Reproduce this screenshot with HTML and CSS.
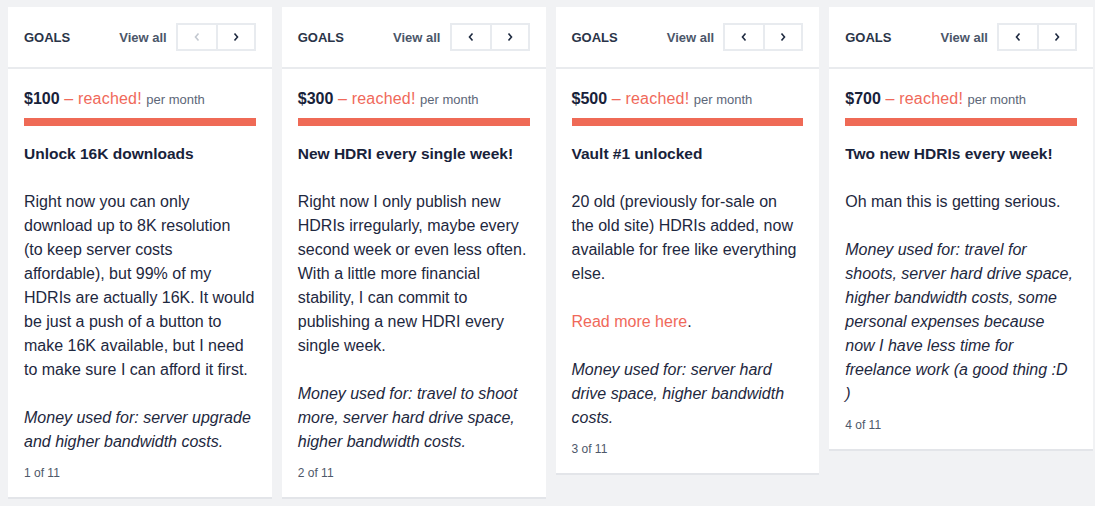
FILE: index.html
```html
<!DOCTYPE html>
<html lang="en">
<head>
<meta charset="utf-8">
<title>Goals</title>
<link rel="stylesheet" href="styles.css">
</head>
<body>
<div class="goals">
  <section class="card">
    <header class="card-head">
      <h2 class="card-title">GOALS</h2>
      <a class="view-all" href="#">View all</a>
      <div class="pager">
        <button class="pager-btn is-disabled" aria-label="Previous"><svg viewBox="0 0 8 12" class="chev"><polyline points="5.5,2.5 2.5,6 5.5,9.5"/></svg></button>
        <button class="pager-btn" aria-label="Next"><svg viewBox="0 0 8 12" class="chev"><polyline points="2.5,2.5 5.5,6 2.5,9.5"/></svg></button>
      </div>
    </header>
    <div class="card-body">
      <div class="price"><strong>$100</strong><span class="reached"> – reached!</span> <span class="per">per month</span></div>
      <div class="bar"></div>
      <h3 class="goal-title">Unlock 16K downloads</h3>
      <p class="text">Right now you can only<br>download up to 8K resolution<br>(to keep server costs<br>affordable), but 99% of my<br>HDRIs are actually 16K. It would<br>be just a push of a button to<br>make 16K available, but I need<br>to make sure I can afford it first.</p>
      <p class="text used">Money used for: server upgrade<br>and higher bandwidth costs.</p>
      <div class="count">1 of 11</div>
    </div>
  </section>

  <section class="card">
    <header class="card-head">
      <h2 class="card-title">GOALS</h2>
      <a class="view-all" href="#">View all</a>
      <div class="pager">
        <button class="pager-btn" aria-label="Previous"><svg viewBox="0 0 8 12" class="chev"><polyline points="5.5,2.5 2.5,6 5.5,9.5"/></svg></button>
        <button class="pager-btn" aria-label="Next"><svg viewBox="0 0 8 12" class="chev"><polyline points="2.5,2.5 5.5,6 2.5,9.5"/></svg></button>
      </div>
    </header>
    <div class="card-body">
      <div class="price"><strong>$300</strong><span class="reached"> – reached!</span> <span class="per">per month</span></div>
      <div class="bar"></div>
      <h3 class="goal-title">New HDRI every single week!</h3>
      <p class="text">Right now I only publish new<br>HDRIs irregularly, maybe every<br>second week or even less often.<br>With a little more financial<br>stability, I can commit to<br>publishing a new HDRI every<br>single week.</p>
      <p class="text used">Money used for: travel to shoot<br>more, server hard drive space,<br>higher bandwidth costs.</p>
      <div class="count">2 of 11</div>
    </div>
  </section>

  <section class="card">
    <header class="card-head">
      <h2 class="card-title">GOALS</h2>
      <a class="view-all" href="#">View all</a>
      <div class="pager">
        <button class="pager-btn" aria-label="Previous"><svg viewBox="0 0 8 12" class="chev"><polyline points="5.5,2.5 2.5,6 5.5,9.5"/></svg></button>
        <button class="pager-btn" aria-label="Next"><svg viewBox="0 0 8 12" class="chev"><polyline points="2.5,2.5 5.5,6 2.5,9.5"/></svg></button>
      </div>
    </header>
    <div class="card-body">
      <div class="price"><strong>$500</strong><span class="reached"> – reached!</span> <span class="per">per month</span></div>
      <div class="bar"></div>
      <h3 class="goal-title">Vault #1 unlocked</h3>
      <p class="text">20 old (previously for-sale on<br>the old site) HDRIs added, now<br>available for free like everything<br>else.</p>
      <p class="text"><a class="link" href="#">Read more here</a>.</p>
      <p class="text used">Money used for: server hard<br>drive space, higher bandwidth<br>costs.</p>
      <div class="count">3 of 11</div>
    </div>
  </section>

  <section class="card">
    <header class="card-head">
      <h2 class="card-title">GOALS</h2>
      <a class="view-all" href="#">View all</a>
      <div class="pager">
        <button class="pager-btn" aria-label="Previous"><svg viewBox="0 0 8 12" class="chev"><polyline points="5.5,2.5 2.5,6 5.5,9.5"/></svg></button>
        <button class="pager-btn" aria-label="Next"><svg viewBox="0 0 8 12" class="chev"><polyline points="2.5,2.5 5.5,6 2.5,9.5"/></svg></button>
      </div>
    </header>
    <div class="card-body">
      <div class="price"><strong>$700</strong><span class="reached"> – reached!</span> <span class="per">per month</span></div>
      <div class="bar"></div>
      <h3 class="goal-title">Two new HDRIs every week!</h3>
      <p class="text">Oh man this is getting serious.</p>
      <p class="text used">Money used for: travel for<br>shoots, server hard drive space,<br>higher bandwidth costs, some<br>personal expenses because<br>now I have less time for<br>freelance work (a good thing :D<br>)</p>
      <div class="count">4 of 11</div>
    </div>
  </section>
</div>
</body>
</html>
```

FILE: styles.css
```css
* { box-sizing: border-box; }

html, body {
  margin: 0;
  padding: 0;
  background: #f1f2f4;
}

body {
  font-family: "Liberation Sans", Arial, sans-serif;
  color: #18223a;
}

.goals {
  display: grid;
  grid-template-columns: repeat(4, 1fr);
  gap: 10px;
  align-items: start;
  padding: 7px 2px 7px 8px;
}

.card {
  background: #ffffff;
  border-bottom: 2px solid #e3e5e9;
}

.card-head {
  display: flex;
  align-items: center;
  height: 62px;
  padding: 0 16px;
  border-bottom: 2px solid #e9ebee;
}

.card-title {
  margin: 0;
  font-size: 13px;
  font-weight: 700;
  color: #2a3448;
  flex: 1;
}

.view-all {
  font-size: 13px;
  font-weight: 700;
  color: #4b5669;
  text-decoration: none;
  margin-right: 9px;
}

.pager {
  display: flex;
  border: 2px solid #e8ebef;
  height: 28px;
}

.pager-btn {
  width: 38px;
  height: 24px;
  padding: 0;
  margin: 0;
  border: 0;
  background: #fff;
  display: flex;
  align-items: center;
  justify-content: center;
}

.pager-btn + .pager-btn {
  border-left: 2px solid #e8ebef;
}

.chev {
  width: 8px;
  height: 12px;
  fill: none;
  stroke: #1e2a40;
  stroke-width: 1.6;
}

.is-disabled .chev {
  stroke: #c3c8d0;
}

.card-body {
  padding: 17px 16px 15px 16px;
}

.price {
  height: 26px;
  line-height: 26px;
  font-size: 16px;
  white-space: nowrap;
}

.price strong {
  font-weight: 700;
  color: #18223a;
}

.reached {
  color: #f0695a;
  letter-spacing: 0.2px;
}

.per {
  font-size: 13px;
  color: #5c6678;
}

.bar {
  margin-top: 6px;
  height: 8px;
  background: #ef6a56;
}

.goal-title {
  margin: 16px 0 0 0;
  font-size: 15.5px;
  line-height: 24px;
  font-weight: 700;
  color: #18223a;
}

.text {
  margin: 24px 0 0 0;
  font-size: 16px;
  line-height: 24px;
  white-space: nowrap;
  color: #1e2840;
}

.used {
  font-style: italic;
}

.link {
  color: #f0695a;
  text-decoration: none;
}

.count {
  margin-top: 10px;
  font-size: 12px;
  line-height: 18px;
  color: #4e586a;
}
```
